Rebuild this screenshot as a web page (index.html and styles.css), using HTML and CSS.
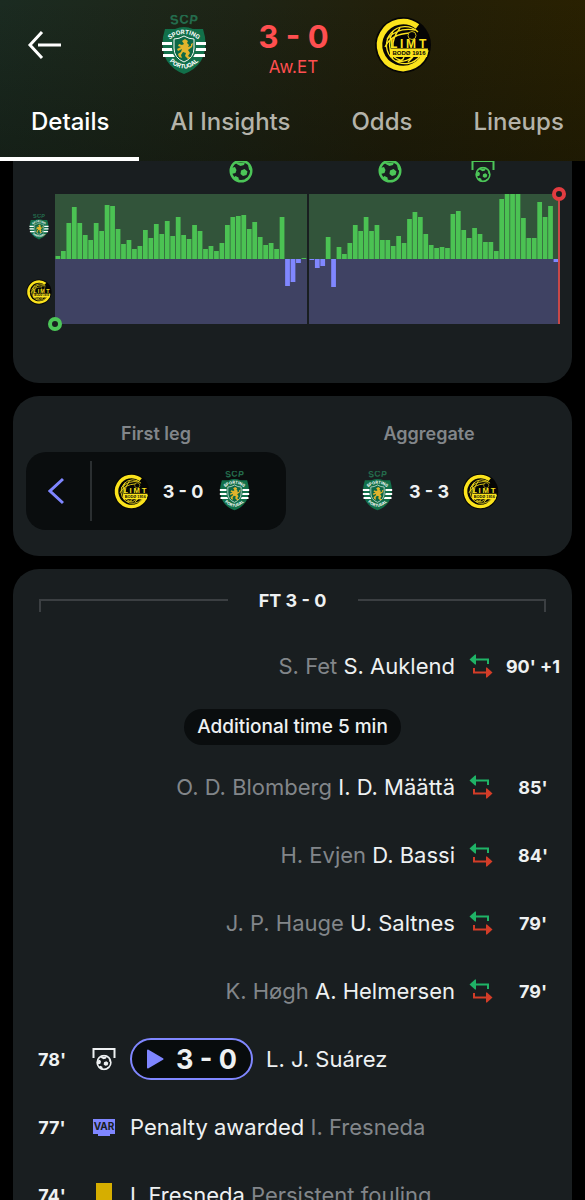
FILE: index.html
```html
<!DOCTYPE html>
<html lang="en">
<head>
<meta charset="utf-8">
<meta name="viewport" content="width=device-width, initial-scale=1">
<title>Sporting CP 3 - 0 Bodø/Glimt</title>
<link rel="stylesheet" href="styles.css">
</head>
<body>
<svg class="defs" aria-hidden="true">
  <symbol id="sporting" viewBox="0 0 44 60">
    <path id="arc-scp" d="M4 11.500Q22 6 40 11.500" fill="none"/>
    <text class="crest-scp"><textPath href="#arc-scp" startOffset="50%" text-anchor="middle">SCP</textPath></text>
    <path d="M3 14H13Q22 10 31 14H41L43 22Q45 36 39 46Q33 55 22 59Q11 55 5 46Q-1 36 1 22Z" fill="#12704a"/>
    <path d="M0 27H44V30H0ZM0 33H44V36H0ZM1 39H43V42H1Z" fill="#fff"/>
    <path d="M10 22Q22 15 34 22V34Q33 45 22 49Q11 45 10 34Z" fill="#12704a"/>
    <path d="M12 24Q17 24 22 21Q27 24 32 24V33Q32 43 22 47Q12 43 12 33Z" fill="#0d6846" stroke="#f2f6f1" stroke-width="1"/>
    <path d="M20 26L23 24L26 26L25 28L27 30L26 32L29 31L29 29L31 28L30 32L26 35L28 38L26 41L29 43L26 44L23 41L24 38L21 37L19 40L20 43L17 42L16 39L19 37L20 34L16 36L15 34L19 32L16 31L17 29L20 30L22 29Z" fill="#e2b42c"/>
    <path id="arc-top" d="M5 27Q22 11 39 27" fill="none"/>
    <path id="arc-bottom" d="M6 45Q22 62 38 45" fill="none"/>
    <text class="crest-word"><textPath href="#arc-top" startOffset="50%" text-anchor="middle">SPORTING</textPath></text>
    <text class="crest-word"><textPath href="#arc-bottom" startOffset="50%" text-anchor="middle">PORTUGAL</textPath></text>
  </symbol>
  <symbol id="glimt" viewBox="0 0 58 58">
    <circle cx="29" cy="29" r="28" fill="#050505"/>
    <path d="M43.500 10.500A23.500 23.500 0 1 0 52 34" fill="none" stroke="#fbe31c" stroke-width="5.500"/>
    <g fill="none" stroke="#fbe31c" stroke-width="1.300">
      <path d="M44 16A18.500 18.500 0 1 0 46 40"/>
      <path d="M13 23Q24 11 41 14M11 31Q17 18 36 17M19 15Q12 29 19 43M26 12Q18 22 19 32M22 45Q31 47 38 41M18 39Q28 48 30 41M34 46L39 41"/>
    </g>
    <path d="M16 32.500H54L53 41H16Z" fill="#fbe31c"/>
    <text class="crest-limt" y="32"><tspan x="16">L</tspan><tspan x="26">I</tspan><tspan x="32">M</tspan><tspan x="45">T</tspan></text>
    <circle cx="38" cy="19.500" r="4" fill="#050505" stroke="#fbe31c" stroke-width="0.800"/>
    <text class="crest-bodo" x="35" y="39" text-anchor="middle">BODØ 1916</text>
  </symbol>
  <symbol id="ball" viewBox="0 0 24 24">
    <circle cx="12" cy="12" r="10.300" fill="none" stroke="currentColor" stroke-width="2.400"/>
    <path fill="currentColor" d="M12 11.500L15.500 10L18.500 12.500L17.500 16L14 17L11.500 15ZM6 3.500H16L15 6L11.500 7L8.500 5.500ZM2 9L6 8L7.500 11L6.500 14L2.500 15ZM4 19L6.500 17L9.500 18.500L10 22H7ZM19 6L21 9L22.500 13L20 10.500ZM15.500 20.500L19 18L18 21Z"/>
  </symbol>
  <symbol id="penalty" viewBox="0 0 24 24">
    <path d="M1.500 11V2H22.500V11" fill="none" stroke="currentColor" stroke-width="2"/>
    <svg x="4" y="7.500" width="16" height="16" viewBox="0 0 24 24"><use href="#ball"/></svg>
  </symbol>
  <symbol id="swap" viewBox="0 0 24 24">
    <path d="M5 5.500H19V10" fill="none" stroke="#1fb366" stroke-width="2"/>
    <path d="M0.500 5.500L6 0.500H7V10.500H6Z" fill="#1fb366"/>
    <path d="M5 14V18.500H18" fill="none" stroke="#d33d28" stroke-width="2"/>
    <path d="M23.500 18.500L18 13.500H17V23.500H18Z" fill="#d33d28"/>
  </symbol>
</svg>

<header class="top">
  <div class="match">
    <button class="back" aria-label="Back"><svg viewBox="0 0 36 30"><path d="M34 15H11M15 2L3 15L15 28" fill="none" stroke="#fff" stroke-width="3"/></svg></button>
    <svg class="crest-lg" role="img" aria-label="Sporting CP"><use href="#sporting"/></svg>
    <div class="result"><div class="goals">3 - 0</div><div class="status">Aw.ET</div></div>
    <svg class="crest-lg round" role="img" aria-label="Bodø/Glimt"><use href="#glimt"/></svg>
  </div>
  <nav class="tabs">
    <a class="tab active" href="#details">Details</a>
    <a class="tab" href="#insights">AI Insights</a>
    <a class="tab" href="#odds">Odds</a>
    <a class="tab" href="#lineups">Lineups</a>
  </nav>
</header>

<main id="details">
  <section class="card momentum">
    <div class="sides">
      <svg class="side-crest"><use href="#sporting"/></svg>
      <svg class="side-crest"><use href="#glimt"/></svg>
    </div>
    <div class="graph">
      <div class="pins">
        <svg class="pin" style="left:36.9%"><use href="#ball"/></svg>
        <svg class="pin" style="left:66.3%"><use href="#ball"/></svg>
        <svg class="pin" style="left:84.7%"><use href="#penalty"/></svg>
      </div>
      <div class="halves">
        <svg class="half" id="half-1" viewBox="0 0 251 130" preserveAspectRatio="none"></svg>
        <svg class="half" id="half-2" viewBox="0 0 251 130" preserveAspectRatio="none"></svg>
        <span class="dot start"></span>
        <span class="dot end"></span>
      </div>
    </div>
  </section>

  <section class="card legs">
    <div class="leg">
      <h2>First leg</h2>
      <button class="leg-box linked" aria-label="Open first leg">
        <span class="chevron"><svg viewBox="0 0 16 28"><path d="M15 2L2 14L15 26" fill="none" stroke="#7f86ff" stroke-width="3"/></svg></span>
        <span class="leg-score">
          <svg class="crest"><use href="#glimt"/></svg><span>3 - 0</span><svg class="crest tall"><use href="#sporting"/></svg>
        </span>
      </button>
    </div>
    <div class="leg">
      <h2>Aggregate</h2>
      <div class="leg-box">
        <span class="leg-score">
          <svg class="crest tall"><use href="#sporting"/></svg><span>3 - 3</span><svg class="crest"><use href="#glimt"/></svg>
        </span>
      </div>
    </div>
  </section>

  <section class="card timeline">
    <div class="period"><i class="rule left"></i><h2>FT 3 - 0</h2><i class="rule right"></i></div>
    <ul class="events">
      <li class="event away"><span class="what"><span class="dim">S. Fet</span> S. Auklend</span><svg class="icon"><use href="#swap"/></svg><time>90' +1</time></li>
      <li class="extra"><span>Additional time 5 min</span></li>
      <li class="event away"><span class="what"><span class="dim">O. D. Blomberg</span> I. D. Määttä</span><svg class="icon"><use href="#swap"/></svg><time>85'</time></li>
      <li class="event away"><span class="what"><span class="dim">H. Evjen</span> D. Bassi</span><svg class="icon"><use href="#swap"/></svg><time>84'</time></li>
      <li class="event away"><span class="what"><span class="dim">J. P. Hauge</span> U. Saltnes</span><svg class="icon"><use href="#swap"/></svg><time>79'</time></li>
      <li class="event away"><span class="what"><span class="dim">K. Høgh</span> A. Helmersen</span><svg class="icon"><use href="#swap"/></svg><time>79'</time></li>
      <li class="event"><time>78'</time><svg class="icon"><use href="#penalty"/></svg><span class="what goal"><button class="replay"><svg viewBox="0 0 18 20"><path d="M2 1.500L16.500 10L2 18.500Z" fill="#7f86ff" stroke="#7f86ff" stroke-width="2" stroke-linejoin="round"/></svg>3 - 0</button>L. J. Suárez</span></li>
      <li class="event"><time>77'</time><svg class="icon" viewBox="0 0 24 24"><path d="M1 4H23V19H18V21H6V19H1Z" fill="#7f86ff"/><text class="var" x="12" y="15" text-anchor="middle">VAR</text></svg><span class="what">Penalty awarded <span class="dim">I. Fresneda</span></span></li>
      <li class="event"><time>74'</time><svg class="icon" viewBox="0 0 24 24"><path d="M4 0H20V24H4Z" fill="#d6ae00"/></svg><span class="what">I. Fresneda <span class="dim">Persistent fouling</span></span></li>
    </ul>
  </section>
</main>
<script src="script.js"></script>
</body>
</html>
```
FILE: styles.css
```css
* { box-sizing: border-box; }
html { background: #000; }
body {
  margin: 0;
  height: 100vh;
  overflow: hidden;
  background: #000;
  color: #eef1f2;
  font-family: Inter, "Noto Sans", sans-serif;
  font-size: 22px;
}
h2, ul { margin: 0; padding: 0; }
button { border: 0; padding: 0; background: none; color: inherit; font: inherit; cursor: pointer; }
.defs { display: none; }

.top {
  background:
    linear-gradient(180deg, rgba(0, 0, 0, 0), rgba(8, 12, 8, 0.35)),
    linear-gradient(100deg, #1b2b21 0%, #1e2415 40%, #231f08 68%, #2a2100 100%);
}
.match {
  display: grid;
  grid-template-columns: 1fr 60px 160px 58px 1fr;
  align-items: center;
  height: 89px;
}
.back { justify-self: start; width: 36px; height: 30px; margin-left: 27px; }
.back svg { display: block; width: 36px; height: 30px; }
.crest-lg { width: 60px; height: 60px; justify-self: center; }
.crest-lg.round { width: 58px; height: 58px; }
.result { padding-top: 4px; text-align: center; color: #ff4f50; }
.goals { font-size: 31px; font-weight: 700; line-height: 40px; }
.status { font-size: 17px; line-height: 20px; }
.tabs { display: flex; height: 72px; }
.tab {
  padding: 17px 30px 0 31px;
  border-bottom: 4px solid transparent;
  color: #b4b3aa;
  font-size: 24px;
  font-weight: 500;
  line-height: 32px;
  text-decoration: none;
  white-space: nowrap;
}
.tab.active { color: #fff; border-color: #fff; }

main { display: flex; flex-direction: column; gap: 13px; padding: 0 13px; }
.card { background: #191e20; border-radius: 26px; }

.momentum {
  display: grid;
  grid-template-columns: 42px 1fr;
  padding: 0 12px 59px 0;
  border-radius: 0 0 26px 26px;
}
.sides {
  display: grid;
  grid-template-rows: 65px 65px;
  place-items: center;
  padding: 33px 0 0 10px;
}
.side-crest { width: 26px; height: 26px; }
.graph { display: grid; grid-template-rows: 33px 130px; }
.pins { position: relative; overflow: hidden; color: #4cc658; }
.pin { position: absolute; top: -2px; width: 24px; height: 24px; margin-left: -12px; }
.halves { position: relative; display: grid; grid-template-columns: 1fr 1fr; gap: 2px; }
.half {
  width: 100%;
  height: 130px;
  background: linear-gradient(#32543a 50%, #3f4263 50%);
}
#half-2 { border-right: 2px solid #c84848; }
.up { fill: #4bc253; }
.down { fill: #8087ff; }
.dot { position: absolute; width: 14px; height: 14px; border: 4px solid; border-radius: 50%; background: #191e20; }
.start { left: -7px; bottom: -7px; border-color: #4cc658; }
.end { right: -6px; top: -7px; border-color: #e23c40; }

.legs { display: grid; grid-template-columns: 260px 1fr; gap: 13px; padding: 26px 13px; }
.leg { text-align: center; }
.leg h2 { font-size: 18px; font-weight: 600; line-height: 24px; color: #82868a; }
.leg-box { display: flex; align-items: center; width: 100%; height: 78px; margin-top: 6px; border-radius: 20px; }
.leg-box.linked { padding-right: 12px; background: #0a0d0e; }
.chevron { display: grid; place-items: center; width: 66px; height: 60px; border-right: 2px solid #2b2f31; }
.chevron svg { width: 16px; height: 28px; margin-right: 4px; }
.leg-score { display: flex; flex: 1; align-items: center; justify-content: center; gap: 13px; font-size: 18px; font-weight: 700; }
.crest { width: 37px; height: 37px; }
.crest.tall { height: 40px; }

.timeline { padding: 0 13px; border-radius: 26px 26px 0 0; }
.period { display: grid; grid-template-columns: 1fr 130px 1fr; align-items: center; height: 63px; padding: 0 13px; }
.period h2 { font-size: 18px; font-weight: 700; line-height: 24px; text-align: center; }
.rule { height: 13px; margin-top: 10px; border-top: 2px solid #3b3f42; }
.rule.left { border-left: 2px solid #3b3f42; }
.rule.right { border-right: 2px solid #3b3f42; }
.events { list-style: none; }
.event { display: grid; grid-template-columns: 52px 52px 1fr; align-items: center; height: 68px; white-space: nowrap; }
.event.away { grid-template-columns: 1fr 52px 52px; text-align: right; }
.event time { display: flex; justify-content: center; font-size: 18px; font-weight: 700; }
.icon { width: 24px; height: 24px; justify-self: center; color: #eef1f2; }
.dim { color: #82868a; }
.extra { display: grid; place-items: center; height: 53px; }
.extra span { padding: 0 13px; border-radius: 18px; background: #0a0d0e; font-size: 19px; font-weight: 500; line-height: 36px; }
.goal { display: flex; align-items: center; gap: 13px; }
.replay {
  display: flex;
  align-items: center;
  gap: 12px;
  height: 42px;
  padding: 0 14px;
  border: 2px solid #8087ff;
  border-radius: 21px;
  background: #080c0d;
  font-size: 27px;
  font-weight: 700;
}
.replay svg { width: 18px; height: 20px; }

.crest-scp { font: 700 13px Inter, sans-serif; fill: #246b4c; }
.crest-word { font: 700 6px Inter, sans-serif; fill: #fff; }
.crest-limt { font: 700 12px "Liberation Sans", sans-serif; fill: #fbe31c; }
.crest-bodo { font: 700 6px "Liberation Sans", sans-serif; fill: #050505; }
.var { font: 700 10px Inter, sans-serif; fill: #191e20; }
```
FILE: script.js
```js
// Attack momentum per minute: positive values are the home side.
const halves = {
  "half-1": [3, 8, 36, 52, 36, 24, 19, 36, 28, 54, 53, 30, 15, 19, 10, 13, 29, 21, 35, 25, 38, 23, 42, 24, 20, 34, 28, 10, 13, 8, 16, 34, 42, 43, 44, 30, 37, 22, 14, 16, 10, 42, -27, -23, -4, 1],
  "half-2": [-1, -9, -7, 22, -28, 12, 5, 16, 34, 28, 42, 28, 34, 19, 19, 13, 23, 16, 40, 47, 42, 25, 14, 11, 12, 11, 45, 48, 29, 21, 31, 25, 17, 17, 8, 60, 65, 65, 65, 41, 21, 21, 57, 42, 53, -3]
};
for (const [id, values] of Object.entries(halves)) {
  const step = 251 / values.length;
  values.forEach((value, i) => {
    const bar = document.createElementNS("http://www.w3.org/2000/svg", "rect");
    bar.setAttribute("class", value > 0 ? "up" : "down");
    bar.setAttribute("x", i * step + 0.5);
    bar.setAttribute("y", value > 0 ? 65 - value : 65);
    bar.setAttribute("width", step - 0.7);
    bar.setAttribute("height", Math.abs(value));
    document.getElementById(id).append(bar);
  });
}
```
